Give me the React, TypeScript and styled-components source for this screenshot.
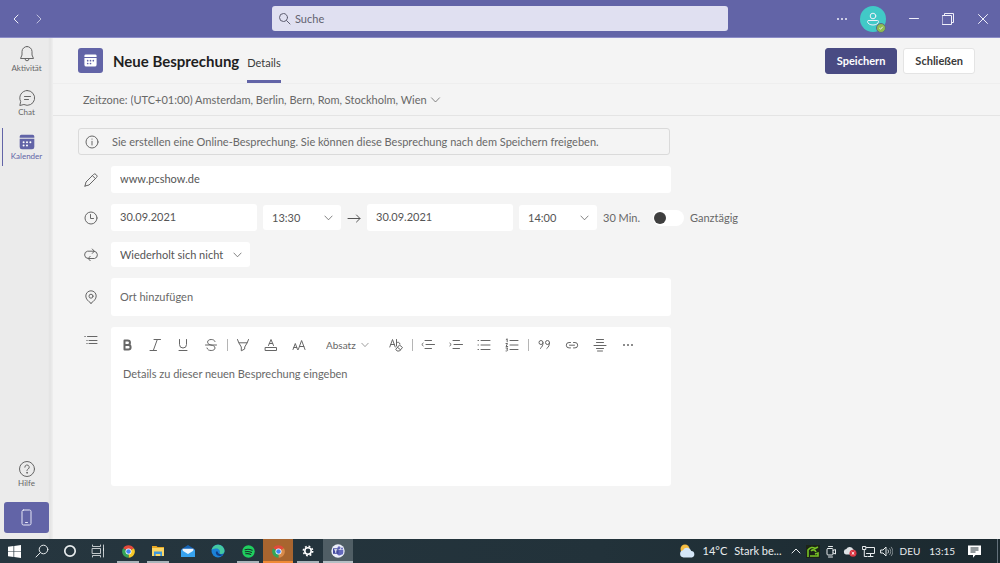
import React from "react";
import styled, { createGlobalStyle, css } from "styled-components";

const color = {
  brand: "#6264a7",
  brandDark: "#494b83",
  page: "#f4f4f4",
  rail: "#ebebeb",
  text: "#555555",
  muted: "#686868",
  icon: "#666666",
  line: "#e4e4e4",
};

const GlobalStyle = createGlobalStyle`
  *, *::before, *::after { box-sizing: border-box; }
  body {
    margin: 0;
    background: ${color.page};
    color: ${color.text};
    font: 11px/16px Lato, "Open Sans", sans-serif;
  }
  button, input, select, textarea {
    margin: 0;
    padding: 0;
    border: 0;
    background: none;
    color: inherit;
    font: inherit;
    outline: none;
  }
  button, select { cursor: pointer; }
  svg { display: block; flex: none; }
`;

const Shell = styled.div`
  display: flex;
  flex-direction: column;
  min-height: 100vh;
`;

/* ---------- title bar ---------- */

const TitleBar = styled.header`
  display: grid;
  grid-template-columns: 1fr minmax(120px, 456px) 1fr;
  align-items: center;
  height: 38px;
  background: ${color.brand};
  border-bottom: 1px solid #8b8cc7;
  color: #f0f0fa;
`;

const History = styled.nav`
  display: flex;
  padding-left: 4px;
`;

const BarButton = styled.button<{ $width?: number; $dim?: boolean }>`
  display: flex;
  align-items: center;
  justify-content: center;
  width: ${(p) => p.$width ?? 23}px;
  height: 26px;
  opacity: ${(p) => (p.$dim ? 0.65 : 1)};
`;

const SearchBox = styled.label`
  display: flex;
  align-items: center;
  gap: 4px;
  height: 25px;
  padding: 0 6px;
  border-radius: 3px;
  background: #e0e0f1;
  color: #5d5d70;
`;

const SearchInput = styled.input`
  flex: 1;
  min-width: 0;
  &::placeholder { color: #62626f; opacity: 1; }
`;

const WindowControls = styled.div`
  display: flex;
  align-items: center;
  justify-content: flex-end;
`;

const Avatar = styled.button`
  position: relative;
  display: flex;
  align-items: center;
  justify-content: center;
  width: 26px;
  height: 26px;
  margin: 0 11px 0 7px;
  border-radius: 50%;
  background: #41c9c7;
`;

const Presence = styled.span`
  position: absolute;
  right: 0;
  bottom: -1px;
  display: flex;
  align-items: center;
  justify-content: center;
  width: 10px;
  height: 10px;
  border: 1px solid #5b6b86;
  border-radius: 50%;
  background: #8fbc4f;
`;

/* ---------- app rail ---------- */

const Body = styled.div`
  display: flex;
  flex: 1;
`;

const Rail = styled.nav`
  display: flex;
  flex-direction: column;
  width: 53px;
  flex: none;
  padding-bottom: 6px;
  background: linear-gradient(to right, ${color.rail} 48px, #e3e3e3 50px, #efefef);
`;

const RailItem = styled.a<{ $active?: boolean }>`
  display: flex;
  flex-direction: column;
  align-items: center;
  gap: 1px;
  height: 44px;
  padding-top: 7px;
  color: ${(p) => (p.$active ? color.brand : color.icon)};
  font-size: 8px;
  line-height: 9px;
  text-decoration: none;
  background: ${(p) =>
    p.$active
      ? `linear-gradient(${color.brand}, ${color.brand}) 2px 2px / 1px 38px no-repeat`
      : "none"};
`;

const RailSpacer = styled.div`
  flex: 1;
`;

const DeviceButton = styled.button`
  display: flex;
  align-items: center;
  justify-content: center;
  width: 45px;
  height: 31px;
  margin: 5px 4px 0;
  border-radius: 3px;
  background: ${color.brand};
  color: #e6e6f6;
`;

/* ---------- meeting header ---------- */

const Main = styled.main`
  flex: 1;
  min-width: 0;
`;

const MeetingHeader = styled.div`
  display: flex;
  align-items: center;
  height: 46px;
  padding: 0 25px;
  border-bottom: 1px solid #eeeeee;
`;

const MeetingBadge = styled.span`
  display: flex;
  align-items: center;
  justify-content: center;
  width: 25px;
  height: 25px;
  border-radius: 3px;
  background: ${color.brand};
`;

const Title = styled.h1`
  margin: 0 8px 0 10px;
  color: #1f1f1f;
  font-size: 15px;
  font-weight: 700;
  line-height: 20px;
`;

const Tab = styled.a`
  align-self: stretch;
  padding-top: 17px;
  border-bottom: 3px solid ${color.brand};
  color: #3a3a3a;
  text-decoration: none;
`;

const Actions = styled.div`
  display: flex;
  gap: 6px;
  margin-left: auto;
`;

const ActionButton = styled.button<{ $primary?: boolean }>`
  height: 26px;
  padding: 0 11px;
  border: 1px solid ${(p) => (p.$primary ? color.brandDark : color.line)};
  border-radius: 3px;
  background: ${(p) => (p.$primary ? color.brandDark : "#fff")};
  color: ${(p) => (p.$primary ? "#fff" : "#3a3a3a")};
  font-weight: 700;
`;

const TimeZoneBar = styled.div`
  display: flex;
  align-items: center;
  gap: 3px;
  height: 32px;
  padding: 0 30px;
  border-bottom: 1px solid ${color.line};
  color: ${color.muted};
`;

/* ---------- drop-downs ---------- */

const SelectFrame = styled.span<{ $width?: number; $filled?: boolean; $inset?: number }>`
  display: inline-grid;
  align-items: center;
  flex: none;
  width: ${(p) => (p.$width ? `${p.$width}px` : "auto")};
  ${(p) =>
    p.$filled &&
    css`
      height: 25px;
      border-radius: 3px;
      background: #fff;
    `}
  > * { grid-area: 1 / 1; }
  > select {
    appearance: none;
    height: 100%;
    padding: 0 ${(p) => (p.$filled ? 22 : 13)}px 0 ${(p) => (p.$filled ? 9 : 0)}px;
  }
  > svg {
    justify-self: end;
    margin-right: ${(p) => p.$inset ?? 0}px;
    pointer-events: none;
  }
`;

/* ---------- form ---------- */

const Form = styled.form`
  display: flex;
  flex-direction: column;
  gap: 11px;
  padding: 12px 25px;
`;

const Notice = styled.p`
  display: flex;
  align-items: center;
  gap: 13px;
  max-width: 592px;
  min-height: 27px;
  margin: 0;
  padding: 0 6px;
  border: 1px solid #dadada;
  border-radius: 3px;
  color: ${color.muted};
`;

const Row = styled.div<{ $top?: boolean }>`
  display: grid;
  grid-template-columns: 27px minmax(0, 560px);
  align-items: ${(p) => (p.$top ? "start" : "center")};
  padding-left: 6px;
  > svg {
    margin-top: ${(p) => (p.$top ? 6 : 0)}px;
    color: ${color.icon};
  }
`;

const TextField = styled.input<{ $width?: number; $height?: number }>`
  flex: none;
  width: ${(p) => (p.$width ? `${p.$width}px` : "100%")};
  height: ${(p) => p.$height ?? 27}px;
  padding: 0 9px 2px;
  border-radius: 3px;
  background: #fff;
  &::placeholder { color: ${color.muted}; opacity: 1; }
`;

const Schedule = styled.div`
  display: flex;
  align-items: center;
  gap: 6px;
  white-space: nowrap;
`;

const Duration = styled.span`
  flex: none;
  width: 44px;
  color: ${color.muted};
`;

const ToggleLabel = styled.label`
  display: flex;
  align-items: center;
  gap: 6px;
  color: ${color.muted};
`;

const Toggle = styled.input`
  appearance: none;
  flex: none;
  width: 31px;
  height: 16px;
  padding: 2px 1px;
  border-radius: 8px;
  background: #fff;
  &::before {
    content: "";
    display: block;
    width: 12px;
    height: 12px;
    border-radius: 50%;
    background: #3f3f3f;
  }
  &:checked::before { margin-left: auto; }
`;

const Editor = styled.div`
  display: flex;
  flex-direction: column;
  min-height: 159px;
  border-radius: 3px;
  background: #fff;
`;

const Toolbar = styled.div`
  display: flex;
  align-items: center;
  flex-wrap: wrap;
  padding: 4px 2px;
  color: ${color.icon};
`;

const Tool = styled.button`
  display: flex;
  align-items: center;
  justify-content: center;
  width: 28px;
  height: 28px;
`;

const ToolDivider = styled.span`
  width: 1px;
  height: 12px;
  margin: 0 1px 0 2px;
  background: #b5b5b5;
`;

const StyleSlot = styled.span`
  display: flex;
  justify-content: center;
  width: 69px;
  font-size: 10px;
`;

const Notes = styled.textarea`
  flex: 1;
  padding: 3px 12px;
  resize: none;
  &::placeholder { color: ${color.muted}; opacity: 1; }
`;

/* ---------- taskbar ---------- */

const Taskbar = styled.footer`
  display: flex;
  height: 24px;
  background: linear-gradient(to right, #26363f, #22323a 60%, #1b292f);
  color: #e8ecee;
`;

const System = styled.div`
  display: flex;
  margin-right: 1px;
`;

const TaskButton = styled.button<{ $width?: number; $open?: boolean; $fill?: string; $mark?: string }>`
  display: flex;
  align-items: center;
  justify-content: center;
  width: ${(p) => p.$width ?? 30}px;
  height: 24px;
  background: ${(p) =>
    p.$open
      ? `linear-gradient(${p.$mark ?? "#a9b4ba"}, ${p.$mark ?? "#a9b4ba"}) center bottom / ${
          p.$fill ? "100%" : "22px"
        } 2px no-repeat ${p.$fill ?? ""}`
      : "none"};
`;

const Tray = styled.div`
  display: flex;
  align-items: center;
  gap: 5px;
  margin-left: auto;
  padding-right: 2px;
  white-space: nowrap;
`;

const Weather = styled.button`
  display: flex;
  align-items: center;
  gap: 7px;
  margin-right: 4px;
`;

const TrayText = styled.span`
  padding: 0 2px;
  font-size: 10px;
`;

const NoticeButton = styled.button`
  display: flex;
  align-items: center;
  height: 24px;
  padding: 0 16px 0 6px;
  border-right: 1px solid #63707a;
`;

/* ---------- icons ---------- */

type IconProps = { size?: number; w?: number; h?: number; box?: string; sw?: number; children: React.ReactNode };

function Icon({ size = 14, w, h, box, sw = 1, children }: IconProps) {
  const width = w ?? size;
  const height = h ?? size;
  return (
    <svg
      width={width}
      height={height}
      viewBox={box ?? `0 0 ${width} ${height}`}
      fill="none"
      stroke="currentColor"
      strokeWidth={sw}
      strokeLinecap="round"
      strokeLinejoin="round"
      aria-hidden="true"
    >
      {children}
    </svg>
  );
}

const Chevron = ({ w = 9 }: { w?: number }) => (
  <Icon w={w} h={6} box="0 0 10 6" sw={0.8}>
    <path d="M1 .8l4 4.2 4-4.2" />
  </Icon>
);

const CalendarGlyph = ({ size, fill, dots }: { size: number; fill: string; dots: string }) => (
  <svg width={size} height={size} viewBox="0 0 16 16" aria-hidden="true">
    <path fill={fill} d="M3 1.500h10A1.500 1.500 0 0 1 14.500 3V4.200h-13V3A1.500 1.500 0 0 1 3 1.500zM1.500 5.200h13v7.300a2 2 0 0 1-2 2h-9a2 2 0 0 1-2-2z" />
    <g fill={dots}>
      <circle cx="8" cy="8.200" r=".9" />
      <circle cx="11" cy="8.200" r=".9" />
      <circle cx="5" cy="8.200" r=".9" />
      <circle cx="5" cy="11.200" r=".9" />
      <circle cx="8" cy="11.200" r=".9" />
    </g>
  </svg>
);

const ChromeLogo = ({ muted }: { muted?: boolean }) => (
  <svg width="13" height="13" viewBox="0 0 26 26" aria-hidden="true">
    <path fill="#e34a3c" d="M13 13L2.200 6.500A12.500 12.500 0 0 1 23.800 6.500z" />
    <path fill={muted ? "#d98a4a" : "#f7c928"} d="M13 13L23.800 6.500A12.500 12.500 0 0 1 13 25.500z" />
    <path fill="#35a457" d="M13 13v12.500A12.500 12.500 0 0 1 2.200 6.500z" />
    <circle cx="13" cy="13" r="6" fill="#fff" />
    <circle cx="13" cy="13" r="4.600" fill="#4285f4" />
  </svg>
);

function Select({
  label, options, width, filled, inset, chevron,
}: {
  label: string; options: string[]; width?: number; filled?: boolean; inset?: number; chevron?: number;
}) {
  return (
    <SelectFrame $width={width} $filled={filled} $inset={inset}>
      <select aria-label={label}>
        {options.map((o) => (
          <option key={o}>{o}</option>
        ))}
      </select>
      <Chevron w={chevron} />
    </SelectFrame>
  );
}

/* ---------- page ---------- */

function TopBar() {
  return (
    <TitleBar>
      <History aria-label="Verlauf">
        <BarButton aria-label="Zurück">
          <Icon w={6} h={10}><path d="M5 1L1 5l4 4" /></Icon>
        </BarButton>
        <BarButton aria-label="Vorwärts" $dim>
          <Icon w={6} h={10}><path d="M1 1l4 4-4 4" /></Icon>
        </BarButton>
      </History>
      <SearchBox>
        <Icon size={13}><circle cx="5.500" cy="5.500" r="4" /><path d="M8.500 8.500l3.500 3.500" /></Icon>
        <SearchInput type="search" placeholder="Suche" aria-label="Suche" />
      </SearchBox>
      <WindowControls>
        <BarButton aria-label="Mehr">
          <Icon w={12} h={4}>
            <g fill="currentColor" stroke="none"><circle cx="2" cy="2" r="1" /><circle cx="6" cy="2" r="1" /><circle cx="10" cy="2" r="1" /></g>
          </Icon>
        </BarButton>
        <Avatar aria-label="Profil">
          <Icon size={14}>
            <circle cx="7" cy="4" r="2.800" />
            <path d="M2.500 8.500h9a1 1 0 0 1 1 1c0 2-2.500 3.500-5.500 3.500S1.500 11.500 1.500 9.500a1 1 0 0 1 1-1z" />
          </Icon>
          <Presence><Icon size={6}><path d="M1.500 3.200l1 1 2-2.200" /></Icon></Presence>
        </Avatar>
        <BarButton $width={33} aria-label="Minimieren">
          <Icon w={10} h={10}><path d="M.5 4.500h9" /></Icon>
        </BarButton>
        <BarButton $width={35} aria-label="Wiederherstellen">
          <Icon size={12}><path d="M.5 2.500h9v9h-9zM2.500 2.500V.5h9v9h-2" /></Icon>
        </BarButton>
        <BarButton $width={35} aria-label="Fenster schließen">
          <Icon size={10}><path d="M.5 .5l9 9M9.500 .5l-9 9" /></Icon>
        </BarButton>
      </WindowControls>
    </TitleBar>
  );
}

function AppRail() {
  return (
    <Rail aria-label="Apps">
      <RailItem href="#aktivitaet">
        <Icon size={18}>
          <path d="M9 1.500a5 5 0 0 1 5 5V10l1.500 3.500h-13L4 10V6.500a5 5 0 0 1 5-5zM7 13.800a2 2 0 0 0 4 0" />
        </Icon>
        Aktivität
      </RailItem>
      <RailItem href="#chat">
        <Icon size={18}>
          <path d="M9.200 1.500a7.400 7.400 0 1 1-3.300 14L1.800 16.500l.9-4A7.400 7.400 0 0 1 9.200 1.500zM6.500 7.500h6M6.500 10.500h4" />
        </Icon>
        Chat
      </RailItem>
      <RailItem href="#kalender" $active aria-current="page">
        <CalendarGlyph size={18} fill={color.brand} dots="#fff" />
        Kalender
      </RailItem>
      <RailSpacer />
      <RailItem href="#hilfe">
        <Icon size={18}>
          <circle cx="9" cy="9" r="7.500" />
          <path d="M6.800 7.200a2.200 2.200 0 1 1 3.300 1.900c-.8.5-1.100.8-1.100 1.600" />
          <circle cx="9" cy="12.800" r=".4" fill="currentColor" />
        </Icon>
        Hilfe
      </RailItem>
      <DeviceButton aria-label="Mobile App">
        <Icon w={11} h={17}><rect x="1" y="1" width="9" height="15" rx="1.500" /><path d="M4.500 13.500h2" /></Icon>
      </DeviceButton>
    </Rail>
  );
}

const dots = (
  <g fill="currentColor" stroke="none"><circle cx="3" cy="7" r="1" /><circle cx="7" cy="7" r="1" /><circle cx="11" cy="7" r="1" /></g>
);

const toolGroups = {
  font: [
    { name: "Fett", draw: <path strokeWidth="2" d="M4.500 2.500h3.200a2.200 2.200 0 0 1 0 4.500H4.500zM4.500 7h3.800a2.300 2.300 0 0 1 0 4.600H4.500z" /> },
    { name: "Kursiv", draw: <path d="M6 1.500h6.500M2 12.500h6.500M9.300 1.500l-4 11" /> },
    { name: "Unterstrichen", draw: <path d="M3.500 1.500v5a3.500 3.500 0 0 0 7 0v-5M3 12.500h8" /> },
    { name: "Durchgestrichen", draw: <path d="M11 3.500c-.5-1.400-2-2-3.800-2-2.200 0-3.600 1-3.600 2.600C3.600 6.500 6 6.500 7 7c2 .5 4 1 4 3 0 1.600-1.600 2.500-3.800 2.500C5 12.500 3.500 11.800 3 10M1.500 7h11" /> },
  ],
  colour: [
    { name: "Texthervorhebung", draw: <path d="M1.500 1.500l1.300 3.300h8.400l1.300-3.300M2.800 4.800L5.300 9v3.800L8.700 11V9l2.500-4.200" /> },
    { name: "Schriftfarbe", draw: <path d="M4.500 7.500l2.500-6 2.500 6M5.300 5.500h3.400M1.500 9.500h11v3h-11z" /> },
    { name: "Schriftgrad", draw: <path d="M1 11.500l2.300-6 2.200 6M1.800 9.500h3M6.300 11.500l3.300-9 3.400 9M7.500 8.500h4.300" /> },
  ],
  indent: [
    { name: "Einzug verkleinern", draw: <path d="M4 2.500h6.500M5 6.500h8.500M4 10.500h6.500M2.200 5.200L.8 6.500l1.400 1.300" /> },
    { name: "Einzug vergrößern", draw: <path d="M4 2.500h6.500M5 6.500h8.500M4 10.500h6.500M.8 5.200l1.400 1.300L.8 7.800" /> },
    { name: "Aufzählung", draw: <path d="M4 2.500h9M4 7h9M4 11.500h9M1 2.500h.5M1 7h.5M1 11.500h.5" /> },
    { name: "Nummerierung", draw: <path d="M5 2.500h8M5 7h8M5 11.500h8M1.200 1.500l1-.7v3M1 5.500h1.500L1 8.500h1.700M1 10h1.700L1.800 11.300c1.400 0 1.400 2-.8 1.700" /> },
  ],
  insert: [
    { name: "Zitat", draw: <path d="M6 4.500a2 2 0 1 0-2 2 2 2 0 0 0 2-2c0 2.500-.7 4.500-2.700 6M12.500 4.500a2 2 0 1 0-2 2 2 2 0 0 0 2-2c0 2.500-.7 4.500-2.700 6" /> },
    { name: "Link", draw: <path d="M5.500 4.500H4a2.700 2.700 0 0 0 0 5.400h1.500M8.500 4.500H10a2.700 2.700 0 0 1 0 5.400H8.500M4.500 7.200h5" /> },
    { name: "Horizontale Linie", draw: <path d="M3.500 1.500h7M3.500 4.500h7M1 7.500h12M3.500 10.500h7M4.500 13h5" /> },
    { name: "Weitere Optionen", draw: dots },
  ],
};

const Tools = ({ items }: { items: { name: string; draw: React.ReactNode }[] }) => (
  <>
    {items.map((t) => (
      <Tool type="button" key={t.name} aria-label={t.name}>
        <Icon>{t.draw}</Icon>
      </Tool>
    ))}
  </>
);

function MeetingForm() {
  return (
    <Form>
      <Notice>
        <Icon><circle cx="7" cy="7" r="6" /><path d="M7 6.300V10M7 4v.2" /></Icon>
        Sie erstellen eine Online-Besprechung. Sie können diese Besprechung nach dem Speichern freigeben.
      </Notice>
      <Row>
        <Icon><path d="M1 13l1-4 7.500-7.500a1.700 1.700 0 0 1 2.500 0l.5.5a1.700 1.700 0 0 1 0 2.500L5 12l-4 1zM8.500 2.700l2.800 2.800" /></Icon>
        <TextField aria-label="Titel" defaultValue="www.pcshow.de" />
      </Row>
      <Row>
        <Icon><circle cx="7" cy="7" r="6" /><path d="M6.500 3.500v4h3" /></Icon>
        <Schedule>
          <TextField $width={146} aria-label="Startdatum" defaultValue="30.09.2021" />
          <Select label="Startzeit" options={["13:30"]} width={78} filled inset={8} />
          <Icon><path d="M1 7.500h12M9.500 4l3.500 3.500L9.500 11" /></Icon>
          <TextField $width={146} aria-label="Enddatum" defaultValue="30.09.2021" />
          <Select label="Endzeit" options={["14:00"]} width={78} filled inset={8} />
          <Duration>30 Min.</Duration>
          <ToggleLabel>
            <Toggle type="checkbox" role="switch" />
            Ganztägig
          </ToggleLabel>
        </Schedule>
      </Row>
      <Row>
        <Icon>
          <path d="M4 10.500A3.700 3.700 0 0 1 3.500 3.200H10M8.300 1l2 2.200-2 2.200M10 3.200a3.700 3.700 0 0 1 .5 7.300H4.500M6.200 8.300l-2 2.200 2 2.200" />
        </Icon>
        <div><Select label="Wiederholung" options={["Wiederholt sich nicht"]} width={139} filled inset={8} /></div>
      </Row>
      <Row>
        <Icon><path d="M7 13.300C4 11 1.800 9 1.800 6a5.200 5.200 0 0 1 10.400 0c0 3-2.200 5-5.200 7.300z" /><circle cx="7" cy="6.200" r="2" /></Icon>
        <TextField $height={38} aria-label="Ort" placeholder="Ort hinzufügen" />
      </Row>
      <Row $top>
        <Icon><path d="M3.500 3.500h9.500M5 7.500h8M5 10.500h8M.8 3.500h.5M2.800 7.500h.4M2.800 10.500h.4" /></Icon>
        <Editor>
          <Toolbar role="toolbar" aria-label="Formatierung">
            <Tools items={toolGroups.font} />
            <ToolDivider />
            <Tools items={toolGroups.colour} />
            <StyleSlot><Select label="Absatzformat" options={["Absatz"]} chevron={8} /></StyleSlot>
            <Tool type="button" aria-label="Formatierung löschen">
              <Icon><path d="M.8 9l2.700-7.500L6.200 9M1.700 6.500h3.600M7.500 1.500V8M7.500 5a2 2 0 0 1 3.500 1M7 11l3.500-4 3 2.500-3 3.500H8.500zM8.500 9.300l3 2.500" /></Icon>
            </Tool>
            <ToolDivider />
            <Tools items={toolGroups.indent} />
            <ToolDivider />
            <Tools items={toolGroups.insert} />
          </Toolbar>
          <Notes aria-label="Details" placeholder="Details zu dieser neuen Besprechung eingeben" />
        </Editor>
      </Row>
    </Form>
  );
}

function DesktopBar() {
  return (
    <Taskbar>
      <System>
        <TaskButton $width={28} aria-label="Start">
          <svg width="13" height="13" viewBox="0 0 13 13" fill="#fff"><path d="M0 1.800L5.500 1v5.200H0zM6.200.9L13 0v6.200H6.200zM0 6.800h5.500V12L0 11.200zM6.200 6.800H13V13l-6.800-.9z" /></svg>
        </TaskButton>
        <TaskButton $width={28} aria-label="Suchen">
          <Icon><circle cx="8.500" cy="5.500" r="4.300" /><path d="M5.400 8.600L1 13" /></Icon>
        </TaskButton>
        <TaskButton $width={28} aria-label="Cortana">
          <Icon sw={1.700}><circle cx="7" cy="7" r="5.200" /></Icon>
        </TaskButton>
        <TaskButton $width={28} aria-label="Aufgabenansicht">
          <Icon><path opacity=".8" d="M1.500 4.500h8v5h-8zM1.500 1v1.500h8V1M1.500 13v-1.500h8V13M12.500 1v12M12.500 4.500v2" /></Icon>
        </TaskButton>
      </System>
      <TaskButton $open aria-label="Chrome"><ChromeLogo /></TaskButton>
      <TaskButton $open aria-label="Explorer">
        <svg width="12" height="12" viewBox="0 0 12 12"><path fill="#e9a823" d="M0 1h4.500l1 1H12v3H0z" /><path fill="#fbd766" d="M0 3h12v8H0z" /><path fill="#3f97dc" d="M2 6.500h8V11H8.300V9H3.700v2H2z" /></svg>
      </TaskButton>
      <TaskButton aria-label="Mail">
        <svg width="14" height="12" viewBox="0 0 14 12"><path fill="#1565b8" d="M0 4.500L7 0l7 4.500V12H0z" /><path fill="#e9f4fd" d="M1.500 3.800h11V7L7 10 1.500 7z" /><path fill="#36a2ee" d="M0 4.800L7 9l7-4.200V12H0z" /></svg>
      </TaskButton>
      <TaskButton aria-label="Edge">
        <svg width="14" height="14" viewBox="0 0 14 14">
          <circle cx="7" cy="7" r="6.500" fill="#1b82d8" />
          <path fill="#45c9a0" d="M.6 6A6.500 6.500 0 0 1 13.500 7c0 2-1.500 3-3.200 3-1.300 0-2-.5-1.500-1.300C9.500 7 8 4.500 5.500 4.500 3.500 4.500 1.500 5 .6 6z" />
          <path fill="#123f86" d="M5 7.500c-.8 3 2 5 4.800 4.200 1-.3 2-.8 2.600-1.500C10.500 11 7 10.500 6.600 7.500z" />
        </svg>
      </TaskButton>
      <TaskButton $open aria-label="Spotify">
        <svg width="13" height="13" viewBox="0 0 13 13"><circle cx="6.500" cy="6.500" r="6.200" fill="#1fcf5f" /><path fill="none" stroke="#17362a" strokeLinecap="round" strokeWidth="1.100" d="M3 4.700c2.500-.7 5-.5 7.200.6M3.300 6.800c2-.6 4.200-.4 6.200.6M3.700 8.800c1.800-.4 3.400-.3 5 .6" /></svg>
      </TaskButton>
      <TaskButton $open $fill="#a8652f" $mark="#f08a35" aria-label="Chrome, zweites Profil"><ChromeLogo muted /></TaskButton>
      <TaskButton $open aria-label="Einstellungen">
        <svg width="12" height="12" viewBox="0 0 12 12" fill="none" stroke="#fff"><circle cx="6" cy="6" r="3.200" strokeWidth="1.600" /><circle cx="6" cy="6" r="4.700" strokeWidth="1.500" strokeDasharray="1.800 1.890" /></svg>
      </TaskButton>
      <TaskButton $open $fill="#505e65" $mark="#b4bfc4" aria-label="Teams">
        <svg width="14" height="14" viewBox="0 0 14 14"><circle cx="7" cy="7" r="6.700" fill="#eceefa" /><circle cx="8" cy="3.800" r="1.500" fill="#6468bb" /><circle cx="11" cy="4.500" r="1" fill="#6468bb" /><path fill="#6468bb" d="M6 5.700h6.300v2.800a2 2 0 0 1-2 2.200A3 3 0 0 1 6 10z" /><path fill="#444a9f" d="M2 4.300h5.500v5.500H2z" /><path stroke="#fff" d="M3.200 5.800h3.100M4.750 5.800v3" /></svg>
      </TaskButton>
      <Tray>
        <Weather>
          <svg width="17" height="14" viewBox="0 0 17 14"><circle cx="6" cy="5" r="4.500" fill="#f6bd42" /><path fill="#d4e6f8" d="M4.500 13.500a3.700 3.700 0 0 1-.5-7.300 4.500 4.500 0 0 1 8.300.8 3.300 3.300 0 0 1 .5 6.500z" /></svg>
          <span>14°C</span>
          <span>Stark be...</span>
        </Weather>
        <Icon w={10} h={6}><path d="M1 5l4-4 4 4" /></Icon>
        <svg width="14" height="13" viewBox="0 0 14 13"><path fill="#1c2417" d="M0 0h14v13H0z" /><path fill="none" stroke="#78c326" strokeWidth="1.600" d="M2 12V5c2-3 5-3 7-1.500L12 2M5 6c2-2 4-1 5 1M4 11h8V8L9 9" /></svg>
        <Icon size={13}><rect x="2" y="3.500" width="6" height="6.500" rx="1" /><path d="M8 5.500l2.500-1v4.500L8 8M3.500 1.500h4M3.500 12h4" /></Icon>
        <svg width="14" height="12" viewBox="0 0 14 12"><path fill="#dfe3e6" d="M3 9.500a2.800 2.800 0 0 1 .3-5.500 3.800 3.800 0 0 1 7 .5 2.600 2.600 0 0 1 .7 5z" /><circle cx="10" cy="8.300" r="3.500" fill="#da3340" /><path stroke="#fff" d="M8.700 7l2.600 2.600M11.300 7L8.700 9.600" /></svg>
        <Icon size={13}><path d="M4.500 2.500h8v6h-8M8.500 8.500v2.500M6 11.500h5M.8 1.500h3v3h-3zM2.300 4.500v7H5" /></Icon>
        <Icon size={13}><path d="M1 5h2l3-3v9L3 8H1zM8 5c.7.900.7 2.100 0 3" /><path opacity=".5" d="M9.700 3.500c1.500 1.700 1.500 4.300 0 6M11.300 2.200c2 2.500 2 6.100 0 8.600" /></Icon>
        <TrayText>DEU</TrayText>
        <TrayText>13:15</TrayText>
        <NoticeButton aria-label="Benachrichtigungen">
          <svg width="13" height="13" viewBox="0 0 13 13"><path fill="#fff" d="M0 .5h13v9.500H7.500L5 12.700V10H0z" /><path stroke="#26343b" d="M2.500 3h8M2.500 5h8M2.500 7h5" /></svg>
        </NoticeButton>
      </Tray>
    </Taskbar>
  );
}

export default function App() {
  return (
    <>
      <GlobalStyle />
      <Shell>
        <TopBar />
        <Body>
          <AppRail />
          <Main>
            <MeetingHeader>
              <MeetingBadge><CalendarGlyph size={15} fill="#fff" dots={color.brand} /></MeetingBadge>
              <Title>Neue Besprechung</Title>
              <Tab href="#details" aria-current="page">Details</Tab>
              <Actions>
                <ActionButton $primary>Speichern</ActionButton>
                <ActionButton>Schließen</ActionButton>
              </Actions>
            </MeetingHeader>
            <TimeZoneBar>
              <span>Zeitzone:</span>
              <Select label="Zeitzone" options={["(UTC+01:00) Amsterdam, Berlin, Bern, Rom, Stockholm, Wien"]} chevron={11} />
            </TimeZoneBar>
            <MeetingForm />
          </Main>
        </Body>
        <DesktopBar />
      </Shell>
    </>
  );
}
